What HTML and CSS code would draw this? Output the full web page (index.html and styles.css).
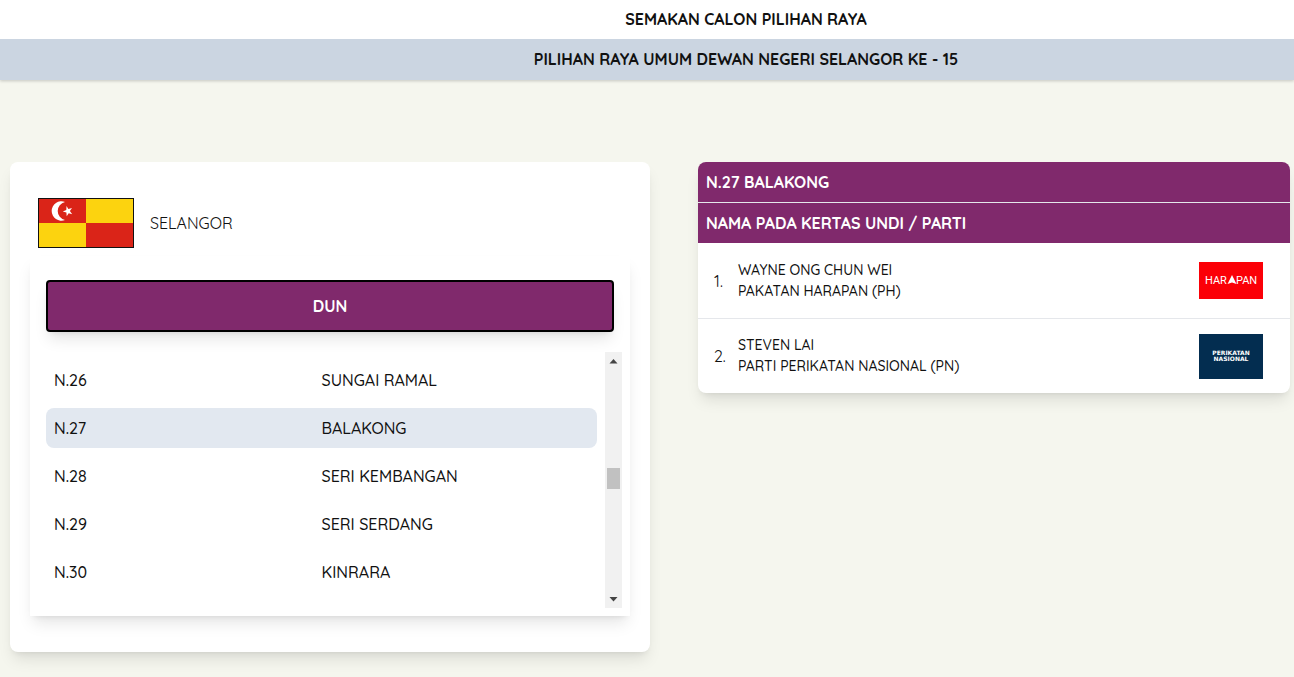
FILE: index.html
```html
<!DOCTYPE html>
<html lang="ms">
<head>
<meta charset="utf-8">
<meta name="viewport" content="width=device-width, initial-scale=1">
<title>Semakan Calon Pilihan Raya</title>
<link rel="stylesheet" href="styles.css">
</head>
<body>
<header class="site-header">
  <h1 class="site-title">SEMAKAN CALON PILIHAN RAYA</h1>
  <h2 class="site-subtitle">PILIHAN RAYA UMUM DEWAN NEGERI SELANGOR KE - 15</h2>
</header>
<main class="content">
  <section class="state-card">
    <div class="state">
      <svg class="flag" viewBox="0 0 96 50" role="img" aria-label="Bendera Selangor">
        <rect width="96" height="50" fill="#fcd30f"/>
        <rect width="48" height="25" fill="#da2418"/>
        <rect x="48" y="25" width="48" height="25" fill="#da2418"/>
        <path d="M25.500 4A9.700 9.700 0 1 0 25.500 22A9.200 9.200 0 0 1 25.500 4Z" transform="translate(1.500 0)" fill="#fff"/>
        <path d="M28.500 8L30.400 11L34 10L31.900 13.100L34.200 16.200L30.700 15.200L28.700 18.200L28.400 14.600L24.800 13.400L28.300 12Z" fill="#fff"/>
        <rect x=".5" y=".5" width="95" height="49" fill="none" stroke="#111"/>
      </svg>
      <span class="state-name">SELANGOR</span>
    </div>
    <div class="panel">
      <button class="dun-button" type="button">DUN</button>
      <div class="list-box">
        <ul class="seats">
          <li><a class="seat" href="#n26"><span>N.26</span><span>SUNGAI RAMAL</span></a></li>
          <li><a class="seat selected" href="#n27" aria-current="true"><span>N.27</span><span>BALAKONG</span></a></li>
          <li><a class="seat" href="#n28"><span>N.28</span><span>SERI KEMBANGAN</span></a></li>
          <li><a class="seat" href="#n29"><span>N.29</span><span>SERI SERDANG</span></a></li>
          <li><a class="seat" href="#n30"><span>N.30</span><span>KINRARA</span></a></li>
        </ul>
        <div class="scrollbar" aria-hidden="true">
          <svg class="arrow" viewBox="0 0 17 17"><path d="M4.500 11.500L8.500 7L12.500 11.500Z"/></svg>
          <div class="track"><div class="before"></div><div class="thumb"></div><div class="after"></div></div>
          <svg class="arrow" viewBox="0 0 17 17"><path d="M4.500 6L8.500 10.500L12.500 6Z"/></svg>
        </div>
      </div>
    </div>
  </section>
  <section class="result-card">
    <table class="candidates">
      <thead>
        <tr><th colspan="3">N.27 BALAKONG</th></tr>
        <tr><th colspan="3">NAMA PADA KERTAS UNDI / PARTI</th></tr>
      </thead>
      <tbody>
        <tr>
          <td class="number">1.</td>
          <td class="name">WAYNE ONG CHUN WEI<br>PAKATAN HARAPAN (PH)</td>
          <td class="party">
            <svg class="logo" viewBox="0 0 64 37" role="img" aria-label="Harapan">
              <rect width="64" height="37" fill="#fb0007"/>
              <g class="harapan-text"><text x="6" y="22">HAR</text><text x="37" y="22">PAN</text></g>
              <path d="M28.500 22L33 13L37.500 22L33 20.500Z" fill="#fff"/>
            </svg>
          </td>
        </tr>
        <tr>
          <td class="number">2.</td>
          <td class="name">STEVEN LAI<br>PARTI PERIKATAN NASIONAL (PN)</td>
          <td class="party">
            <svg class="logo" viewBox="0 0 64 45" role="img" aria-label="Perikatan Nasional">
              <rect width="64" height="45" fill="#032d50"/>
              <g class="pn-text"><text x="32" y="21">PERIKATAN</text><text x="32" y="27">NASIONAL</text></g>
            </svg>
          </td>
        </tr>
      </tbody>
    </table>
  </section>
</main>
</body>
</html>
```
FILE: styles.css
```css
* { box-sizing: border-box; }
body {
  margin: 0;
  background: #f5f6ee;
  color: #111;
  font: 500 16px/24px Quicksand, Lato, sans-serif;
}
.site-header {
  background: #fff;
  text-align: center;
  box-shadow: 0 1px 3px rgba(0, 0, 0, .2);
}
.site-title, .site-subtitle {
  margin: 0;
  padding: 8px 0 8px 198px;
  font-size: 16px;
  line-height: 24px;
  font-weight: 700;
}
.site-title { padding-top: 7px; }
.site-subtitle { background: #cbd5e1; padding-bottom: 9px; }
.content {
  display: grid;
  grid-template-columns: 640fr 592fr;
  gap: 48px;
  align-items: start;
  padding: 82px 4px 24px 10px;
}
.state-card, .result-card {
  background: #fff;
  border-radius: 8px;
  box-shadow: 0 10px 15px -3px rgba(0, 0, 0, .1), 0 4px 6px -4px rgba(0, 0, 0, .1);
}
.state-card { padding: 36px 20px; }
.state {
  display: flex;
  align-items: center;
  gap: 16px;
  padding: 0 8px 8px;
}
.flag { width: 96px; height: 50px; }
.state-name { font-weight: 400; }
.panel {
  padding: 24px 8px 8px 16px;
  box-shadow: 0 10px 15px -3px rgba(0, 0, 0, .1), 0 4px 6px -4px rgba(0, 0, 0, .1);
}
.dun-button {
  display: block;
  width: calc(100% - 8px);
  height: 52px;
  border: 2px solid #000;
  border-radius: 4px;
  background: #80296c;
  color: #fff;
  font: inherit;
  font-weight: 700;
  box-shadow: 0 10px 15px -3px rgba(0, 0, 0, .1), 0 4px 6px -4px rgba(0, 0, 0, .1);
}
.list-box { display: flex; gap: 8px; margin-top: 20px; }
.seats {
  flex: 1;
  display: flex;
  flex-direction: column;
  gap: 8px;
  margin: 0;
  padding: 8px 0 16px;
  list-style: none;
}
.seat {
  display: grid;
  grid-template-columns: 1fr 1fr;
  padding: 8px;
  border-radius: 8px;
  color: inherit;
  text-decoration: none;
}
.selected { background: #e2e8f0; }
.scrollbar {
  display: flex;
  flex-direction: column;
  width: 17px;
  background: #f1f1f1;
}
.arrow { width: 17px; height: 17px; fill: #444; }
.track { flex: 1; display: flex; flex-direction: column; padding: 0 2px; }
.before { flex: 99; }
.after { flex: 102; }
.thumb { height: 21px; background: #c1c1c1; }
.result-card { overflow: hidden; }
.candidates { width: 100%; border-collapse: collapse; }
.candidates th {
  padding: 8px;
  background: #80296c;
  color: #fff;
  text-align: left;
  font-weight: 700;
}
.candidates tr + tr > * { border-top: 1px solid #e5e7eb; }
.candidates td { height: 75px; padding: 1px 0 0; }
.candidates .number { width: 40px; padding-left: 16px; font-weight: 400; }
.name { font-size: 14px; line-height: 21px; }
.candidates .party { width: 91px; padding-right: 27px; }
.logo { display: block; width: 64px; }
.harapan-text { fill: #fff; font: 400 11px Roboto, sans-serif; }
.pn-text { fill: #fff; font: 700 6px "DejaVu Sans", sans-serif; text-anchor: middle; }
```
